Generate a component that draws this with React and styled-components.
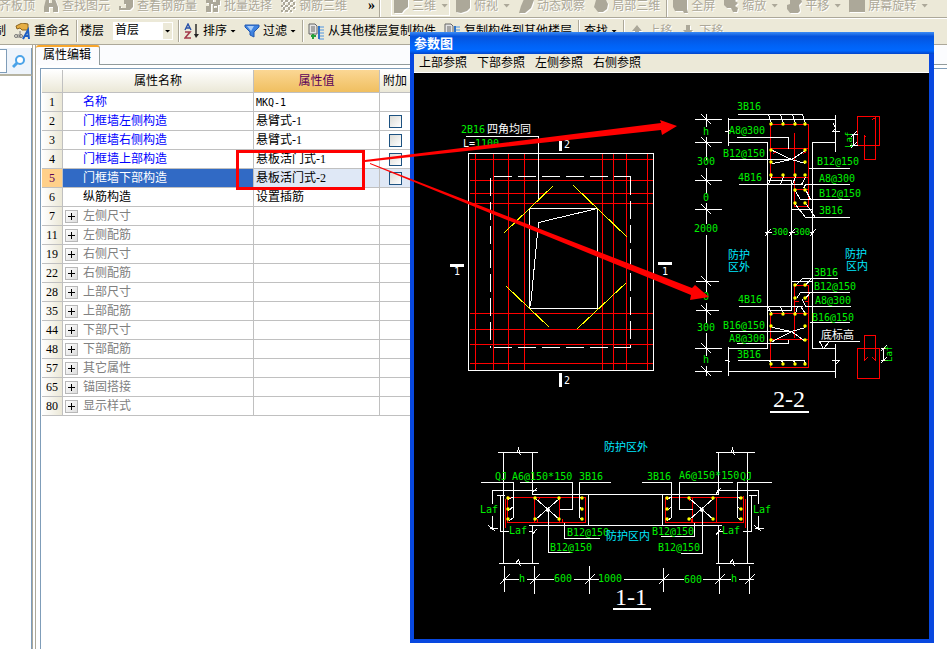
import { useState } from 'react'
import styled, { createGlobalStyle } from 'styled-components'

const GlobalStyle = createGlobalStyle`
  * {
    box-sizing: border-box;
  }

  body {
    margin: 0;
    background-color: #ffffff;
    font-family: "Liberation Serif", "Noto Sans CJK SC", sans-serif;
    font-size: 12px;
    line-height: 16px;
    color: #000000;
  }

  button, input, select {
    font: inherit;
    color: inherit;
  }
`;

// Styled components
const AppContainer = styled.div`
  position: relative;
  display: flex;
  flex-direction: column;
  min-height: 100vh;
  overflow: hidden;
`;

const ToolBar = styled.div`
  display: flex;
  align-items: center;
  height: ${props => props.$top ? '18px' : '27px'};
  padding-bottom: ${props => props.$top ? '6px' : '0'};
  background-color: #ece9d8;
  border-bottom: 1px solid #aca899;
  box-shadow: ${props => props.$top ? 'none' : 'inset 0 1px 0 #ffffff'};
  white-space: nowrap;
  overflow: hidden;
`;

const ToolButton = styled.button`
  display: flex;
  flex: none;
  align-items: center;
  gap: 3px;
  height: 20px;
  padding: 0 4px;
  border: none;
  background: none;
  color: #000000;
  cursor: pointer;

  &:disabled {
    color: #aca899;
    text-shadow: 1px 1px 0 #ffffff;
    cursor: default;
  }
`;

// First button of a bar that is scrolled partly out of view
const ClippedButton = styled(ToolButton)`
  margin-left: ${props => props.disabled ? '-5px' : '-10px'};
`;

const FramedButton = styled(ToolButton)`
  padding: 0 1px;
  margin: 0 1px 0 10px;
  border: 1px solid #ffffff;
`;

const Caret = styled.span`
  width: 6px;
  height: 3px;
  background-color: currentColor;
  clip-path: polygon(0 0, 100% 0, 50% 100%);

  ${ToolButton}:disabled & {
    width: 7px;
    height: 4px;
    margin-left: 2px;
  }
`;

const Separator = styled.span`
  flex: none;
  width: 2px;
  height: 22px;
  margin-left: 2px;
  background-color: #aca899;
  border-right: 1px solid #ffffff;
`;

const Overflow = styled.span`
  flex: none;
  width: 26px;
  padding-left: 17px;
  font-size: 14px;
  font-weight: 700;
  line-height: 10px;
`;

const FloorLabel = styled.label`
  display: flex;
  align-items: center;
  gap: 9px;
  padding: 0 3px 0 2px;
`;

const SelectBox = styled.span`
  display: flex;
  align-items: center;
  justify-content: flex-end;
  position: relative;
  width: 60px;
  height: 18px;
  padding-right: 1px;
  background-color: #ffffff;
`;

const FloorSelect = styled.select`
  position: absolute;
  inset: 0;
  width: 100%;
  padding: 0 0 3px 2px;
  border: none;
  background: transparent;
  appearance: none;
`;

const DropArrow = styled.span`
  display: flex;
  align-items: center;
  justify-content: center;
  width: 9px;
  height: 16px;
  background-color: #ece9d8;
`;

const Body = styled.div`
  display: flex;
  flex: 1;
`;

const SidePanel = styled.aside`
  display: flex;
  flex-direction: column;
  flex: none;
  width: 36px;
  padding-top: 3px;
  border-right: 4px double #aca899;
  background-color: #ffffff;
`;

const SearchRow = styled.div`
  display: flex;
  align-items: center;
  gap: 5px;
  height: 28px;
  border-right: 1px solid #7f9db9;
  border-bottom: 2px solid #b7b4a2;
  background-color: #eef4fb;
`;

const SearchInput = styled.input`
  width: 7px;
  height: 24px;
  padding: 0;
  border: 1px solid #7f9db9;
  border-left: none;
  background-color: #ffffff;
`;

const PlainButton = styled.button`
  display: flex;
  padding: 0;
  border: none;
  background: none;
`;

const SideList = styled.div`
  flex: 1;
  border-right: 1px solid #7f9db9;
`;

const Editor = styled.main`
  display: flex;
  flex: 1;
  flex-direction: column;
  min-width: 0;
`;

const TabStrip = styled.div`
  height: 20px;
  background-color: #fbfcfe;
  border-bottom: 1px solid #919b9c;
`;

const Tab = styled.button`
  height: 20px;
  padding: 0 8px 2px 7px;
  border: none;
  border-top: 2px solid #f8a72d;
  border-right: 1px solid #919b9c;
  border-radius: 3px 3px 0 0;
  background-color: #fcfcfe;
  line-height: 16px;
`;

const GridFrame = styled.div`
  flex: 1;
  margin: 3px 0 0 4px;
  padding: 1px;
  border-top: 1px solid #7f9db9;
  border-left: 1px solid #7f9db9;
`;

const Grid = styled.table`
  width: 369px;
  border-collapse: separate;
  border-spacing: 0;
  table-layout: fixed;
`;

const HeadCell = styled.th`
  width: ${props => props.$width};
  height: 23px;
  padding: 0;
  border-right: 1px solid #c0c0c0;
  border-bottom: 1px solid #c0c0c0;
  background: ${props => props.$active
    ? 'linear-gradient(#fbd794, #f0bf60)'
    : 'linear-gradient(#ffffff, #ebe8d7)'};
  color: ${props => props.$active ? '#5a005a' : '#000000'};
  font-weight: 400;
`;

const NumberCell = styled.th`
  height: 19px;
  padding: 0;
  border-right: 1px solid #c0c0c0;
  border-bottom: 1px solid #c0c0c0;
  background: ${props => props.$selected ? '#ffd08a' : 'linear-gradient(90deg, #ffffff, #ebe8d7)'};
  color: ${props => props.$selected ? '#5a005a' : '#000000'};
  font-weight: 400;
`;

const Cell = styled.td`
  height: 19px;
  padding: 0 2px;
  border-right: 1px solid #c0c0c0;
  border-bottom: 1px solid #c0c0c0;
  background-color: ${props => props.$fill || '#ffffff'};
  color: ${props => props.$color || '#000000'};
  line-height: 16px;
  white-space: nowrap;
`;

const NameLine = styled.div`
  display: flex;
  align-items: center;
  gap: 5px;
  padding-left: ${props => props.$indent ? '18px' : '0'};
`;

const ExpandButton = styled.button`
  display: flex;
  width: 13px;
  height: 13px;
  padding: 0;
  border: 1px solid #b8b8b8;
  background: linear-gradient(135deg, #ffffff, #dddddd);
`;

const Code = styled.span`
  font-family: "DejaVu Sans Mono", monospace;
  font-size: 10px;
`;

const CheckBox = styled.input`
  display: block;
  width: 13px;
  height: 13px;
  margin: 0 auto;
  appearance: none;
  border: 1px solid #1d5281;
  background: linear-gradient(135deg, #dcdcd7, #ffffff);

  &:checked {
    background: #21a121;
  }
`;

const Dialog = styled.section`
  position: absolute;
  top: 32px;
  left: 410px;
  display: flex;
  flex-direction: column;
  border: 4px solid #0848e0;
  border-top: none;
  border-right-width: 5px;
  background-color: #ece9d8;
`;

const TitleBar = styled.h1`
  height: 22px;
  margin: 0 -5px 0 -4px;
  padding: 4px 4px 0;
  background: linear-gradient(#3c8cf5, #0553dd 20%, #0062f5 60%, #0068ff 85%, #0444c8);
  color: #ffffff;
  font-size: 13px;
  font-weight: 700;
  line-height: 16px;
`;

const MenuBar = styled.nav`
  display: flex;
  gap: 10px;
  height: 19px;
  padding: 0 5px;
  border-bottom: 1px solid #ffffff;
`;

const MenuItem = styled.button`
  padding: 0;
  border: none;
  background: none;
  line-height: 16px;
`;

const Drawing = styled.svg`
  display: block;
  background-color: #000000;
`;

const Pen = styled.g`
  fill: none;
  stroke: ${props => props.$color};
  stroke-width: ${props => props.$width || 1};
  shape-rendering: crispEdges;
`;

const Label = styled.text`
  fill: ${props => props.$color || '#00f000'};
  font-family: ${props => props.$serif
    ? '"Liberation Serif", serif'
    : '"DejaVu Sans Mono", "Noto Sans CJK SC", monospace'};
  font-size: ${props => props.$size || 10}px;
`;

const Callout = styled.svg`
  position: absolute;
  top: 110px;
  left: 230px;
  pointer-events: none;
`;

// Toolbar glyphs, drawn on a 16px box
const glyphs = {
  find: 'M3 1h3v4h3V1h3l3 8v5h-5V9H6v5H1V9z',
  view: 'M6 1h9v8l-3 3H1V8h2v2h5V6H6z',
  batch: 'M1 1h7v3h3V2h4v5h-2v7H8V6H6v8H1V8h3V5H1zM9 8v2h3V8z',
  mesh: 'M1 2h14v2H1zM1 7h14v2H1zM1 12h11v2H1zM3 0h2v14H3zM8 0h2v14H8zM13 0h2v11h-2z',
  cube: 'M1 0h14v9l-4 3-2 3H1z',
  top: 'M1 2l4-2h10v10l-3 3-6 2-5-1z',
  orbit: 'M6 1l6-2 4 3-3 8-6 5H1l2-7z',
  local: 'M3 2l5-2 5 2 2 4-1 5-4 3H5L1 9z',
  screen: 'M1 0h14v11l1 4h-4l-1-2H3L1 9z',
  zoom: 'M1 0h14l-3 3 3 2-3 3 3 2-1 4h-4l-2-4H4L1 7z',
  pan: 'M1 7l3-1V2l5-2h6l1 4-3 3 1 6-2 2H4L1 11z',
  rotate: 'M0 0h16v14H0z',
  up: 'M8 2l5 6h-3v6H6V8H3z',
  down: 'M6 2h4v5h3l-5 6-5-6h3z',
};

function GrayIcon({ name }) {
  return (
    <svg width="16" height="16" viewBox="0 0 16 16" aria-hidden="true">
      <path d={glyphs[name]} fill="#ffffff" transform="translate(1 1)" fillRule="evenodd" />
      <path d={glyphs[name]} fill="#aca899" fillRule="evenodd" />
    </svg>
  );
}

function RenameIcon() {
  return (
    <svg width="17" height="17" viewBox="0 0 17 17" aria-hidden="true">
      <path d="M2 3l6-3 6 1v6H8L6 5 3 6z" fill="#e6ae43" stroke="#8a6420" />
      <circle cx="2" cy="13" r="1.5" fill="none" stroke="#777777" />
      <path d="M4 11v4M6 8v7" stroke="#777777" />
      <circle cx="7" cy="13" r="1.5" fill="none" stroke="#777777" />
      <path d="M9 16l5-9 1 9M11 13h4" fill="none" stroke="#1d5fc4" strokeWidth="2" />
    </svg>
  );
}

function SortIcon() {
  return (
    <svg width="16" height="16" viewBox="0 0 16 16" aria-hidden="true">
      <path d="M1 7l3-6 3 6M2 5h4" fill="none" stroke="#2a52a8" strokeWidth="1.4" />
      <path d="M1 9h5l-5 6h6" fill="none" stroke="#a33a4a" strokeWidth="1.6" />
      <path d="M12 1v11" stroke="#222222" strokeWidth="1.4" />
      <path d="M10 11h5l-3 4z" fill="#222222" />
    </svg>
  );
}

function FilterIcon() {
  return (
    <svg width="16" height="16" viewBox="0 0 16 16" aria-hidden="true">
      <path d="M1 2h14v2l-5 5v5l-4-2V9L1 4z" fill="#3f83e0" stroke="#2359b0" />
      <path d="M3 3h7L7 8z" fill="#a9cdf8" />
    </svg>
  );
}

function CopyIcon() {
  return (
    <svg width="17" height="17" viewBox="0 0 17 17" aria-hidden="true">
      <path d="M1 1h6l2 2v8H1z" fill="#e4e4e4" stroke="#666666" />
      <path d="M3 4h4M3 6h4M3 8h4" stroke="#666666" />
      <path d="M5 11v5M3 13h5" stroke="#23a03a" strokeWidth="2" />
      <path d="M11 4h5M11 7h5M11 10h5M11 13h5M11 16h5" stroke="#4f94e0" />
      <path d="M11 3v13" stroke="#2f74c8" strokeWidth="2" />
    </svg>
  );
}

function SearchIcon() {
  return (
    <svg width="15" height="15" viewBox="0 0 15 15" aria-hidden="true">
      <circle cx="8" cy="6" r="4" fill="#ffffff" stroke="#4ba3e8" strokeWidth="2" />
      <path d="M5 9l-4 4" stroke="#4ba3e8" strokeWidth="3" />
    </svg>
  );
}

const properties = [
  { id: 1, name: '名称', value: 'MKQ-1', code: true },
  { id: 2, name: '门框墙左侧构造', value: '悬臂式-1', extra: true },
  { id: 3, name: '门框墙右侧构造', value: '悬臂式-1', extra: true },
  { id: 4, name: '门框墙上部构造', value: '悬板活门式-1', extra: true },
  { id: 5, name: '门框墙下部构造', value: '悬板活门式-2', extra: true },
  { id: 6, name: '纵筋构造', value: '设置插筋', color: '#000000' },
  { id: 7, name: '左侧尺寸', group: true },
  { id: 11, name: '左侧配筋', group: true },
  { id: 19, name: '右侧尺寸', group: true },
  { id: 22, name: '右侧配筋', group: true },
  { id: 28, name: '上部尺寸', group: true },
  { id: 35, name: '上部配筋', group: true },
  { id: 44, name: '下部尺寸', group: true },
  { id: 48, name: '下部配筋', group: true },
  { id: 57, name: '其它属性', group: true },
  { id: 65, name: '锚固搭接', group: true },
  { id: 80, name: '显示样式', group: true },
];

function nameColor(row, selected) {
  if (selected) return '#ffffff';
  if (row.group) return '#808080';
  return row.color || '#0000ff';
}

function PropertyGrid() {
  const [selectedId, setSelectedId] = useState(5);

  return (
    <Grid>
      <thead>
        <tr>
          <HeadCell $width="21px" aria-label="序号" />
          <HeadCell $width="191px">属性名称</HeadCell>
          <HeadCell $width="126px" $active>属性值</HeadCell>
          <HeadCell $width="31px">附加</HeadCell>
        </tr>
      </thead>
      <tbody>
        {properties.map(row => {
          const selected = row.id === selectedId;
          return (
            <tr key={row.id} onClick={() => setSelectedId(row.id)}>
              <NumberCell scope="row" $selected={selected}>{row.id}</NumberCell>
              <Cell $fill={selected ? '#316ac5' : null} $color={nameColor(row, selected)}>
                <NameLine $indent={!row.group}>
                  {row.group && (
                    <ExpandButton aria-label={'展开' + row.name}>
                      <svg width="11" height="11" viewBox="0 0 11 11" aria-hidden="true">
                        <path d="M2 5h7v1H2zM5 2h1v7H5z" fill="#000000" />
                      </svg>
                    </ExpandButton>
                  )}
                  {row.name}
                </NameLine>
              </Cell>
              <Cell $fill={selected ? '#dfe8f6' : null}>
                {row.code ? <Code>{row.value}</Code> : row.value}
              </Cell>
              <Cell $fill={selected ? '#dfe8f6' : null}>
                {row.extra && <CheckBox type="checkbox" aria-label={'附加' + row.name} />}
              </Cell>
            </tr>
          );
        })}
      </tbody>
    </Grid>
  );
}

// Line work, grouped by pen colour
const whiteLines = [
  // elevation
  'M468 153H653V370H468Z',
  'M529 208H597V308H529Z',
  'M597 208L538 222L530 306',
  'M465 136H538V199',
  // section 2-2, level dimensions
  'M706 113V126M706 136V159M706 167V193M706 202V223M706 234V291M706 302V322M706 332V355M706 365V375',
  'M694 119H721M694 142H721M694 180H721M694 209H721M695 281H718M695 310H718M694 348H721M694 371H721',
  'M701 114L711 124M701 137L711 147M701 175L711 185M701 204L711 214M701 276L711 286M701 305L711 315M701 343L711 353M701 366L711 376',
  // section 2-2, concrete outline
  'M728 119H835M728 117V145M835 114V151M728 142H767V348H728M835 142H812V348H835',
  'M724 131H727L730 129M833 123L835 128L832 131H839M767 180H791M791 180V310M791 209H812M791 281H812M767 310H791',
  'M728 346V375M728 371H835M835 343V377M724 360H727L730 362M831 360H839L835 364',
  // section 2-2, leaders
  'M737 114H802M768 114L771 123M780 114L783 123M792 114L795 123M802 114L805 123',
  'M736 137H788V148M729 159H791M772 150L791 159L805 163M805 150L791 159L772 163',
  'M738 184H802M768 184L771 176M780 184L783 176M792 184L795 176M801 184L805 177',
  'M808 168H849M849 184H805L803 188M849 199H800L795 191M810 199L806 191M849 217H805L795 204M815 217L806 204',
  'M764 232H771M788 232H794M809 232H813M764 236L770 229M788 236L794 229M809 236L815 229',
  'M837 278H802L795 285M810 279L805 285M849 292H800L796 298M810 292L805 298M850 306H805L802 299',
  'M738 306H802M768 306L771 313M780 306L783 313M797 306L795 313M800 306L805 313',
  'M729 331H791M772 327L791 331L805 341M805 327L791 331L772 341M736 343H788V339',
  'M737 360H804M769 360L771 364M781 360L783 364M793 360L795 364M804 360L805 364M809 322H849',
  'M818 341H859M819 341L823 348L829 341',
  'M853 134V145M849 134H857M849 145H857M850 137L856 131M850 148L856 142',
  'M883 348V360M880 348H887M880 360H887M880 351L886 345M880 363L886 357',
  // section 1-1, walls and slab
  'M497 452H537M503 452V563M532 452V494H718V452M498 563H538M532 563V525M528 525H721M715 452H754M747 452V563M715 563H753M718 563V525',
  'M515 452H517L518 448L520 455M729 452H731L732 448L734 455M515 563L518 559L520 566M729 563L732 559L734 566',
  'M588 494V525M662 494V525',
  // section 1-1, leaders
  'M480 482H513V517L509 520M513 496L508 499M513 506L508 510M519 482H572V509H559M610 482H579V517L582 520M579 496L582 499M579 506L582 510',
  'M535 498L559 519M559 498L535 519M548 510V552H571M564 522V538H599',
  'M641 482H671V517L667 520M671 496L667 499M671 506L667 510M732 482H679V509H692M771 482H737V517L741 520M737 496L741 499M737 506L741 510',
  'M689 498L713 519M713 498L689 519M702 510V553H680M694 522V536H660',
  'M536 490H492V503M492 515V528M489 528H497M531 493L536 488M500 495V531H508M496 495H504M528 531H532M531 535L536 529M488 525L495 531',
  'M716 490H758V503M758 515V528M754 528H763M715 494L720 488M751 495V531H742M748 495H756M717 531H722M715 535L720 529M754 525L761 531',
  // section 1-1, width dimensions
  'M502 579H518M526 579H553M573 579H598M623 579H683M702 579H730M738 579H753',
  'M504 565V591M534 565V593M589 565V593M663 567V591M719 565V593M749 565V593',
  'M499 584L509 574M529 584L539 574M584 584L594 574M658 584L668 574M714 584L724 574M744 584L754 574',
];

const redLines = [
  'M475 153V370M493 153V370M508 153V370M524 153V370M602 153V370M613 153V370M626 153V370M647 153V370',
  'M469 159H653M469 180H653M469 193H653M469 203H653M469 313H653M469 329H653M469 344H653M469 363H653',
  'M770 124H808V177H770ZM770 148H808M794 132V206H808V177M794 189H808M773 153L776 151M803 153L806 151',
  'M770 313H808V367H770ZM770 339H808M794 337V285H808V313M794 301H798M804 301H808',
  'M857 116H879V145H857ZM875 116V159H864V135L866 137M875 117L872 119',
  'M857 348H879V378H857ZM864 360V335H875V360M864 360L867 357M875 360L872 357',
  'M507 497H585V522H507ZM505 498V527M507 495V498M534 497V522M559 497V522M536 501L539 498M562 522V518M537 518V522',
  'M665 497H743V522H665ZM745 498V527M743 495V498M692 497V522M716 497V522M690 501L688 498M691 518V522',
];

const yellowLines = [
  'M553 185L504 232M573 185L627 237M506 286L549 327M626 282L577 328',
];

const rebarDots = [
  ...[771, 783, 795, 805].flatMap(x => [[x, 124], [x, 175], [x, 314], [x, 364]]),
  ...[771, 805].flatMap(x => [[x, 150], [x, 162], [x, 326], [x, 340]]),
  ...[795, 805].flatMap(x => [[x, 190], [x, 203], [x, 285], [x, 298]]),
  ...[508, 582, 667, 741].flatMap(x => [[x, 498], [x, 509], [x, 519]]),
  ...[535, 559, 689, 713].flatMap(x => [[x, 498], [x, 519]]),
];

const rebarLabels = [
  [461, 133, '2B16'], [475, 147, '1100'],
  [737, 110, '3B16'], [729, 134, 'A8@300'], [723, 157, 'B12@150'], [738, 181, '4B16'],
  [817, 165, 'B12@150'], [819, 182, 'A8@300'], [819, 197, 'B12@150'], [819, 214, '3B16'],
  [703, 135, 'h'], [697, 165, '300'], [703, 201, '0'], [694, 232, '2000'],
  [703, 300, '0'], [697, 331, '300'], [703, 363, 'h'],
  [814, 276, '3B16'], [814, 290, 'B12@150'], [815, 304, 'A8@300'], [812, 321, 'B16@150'],
  [738, 303, '4B16'], [723, 329, 'B16@150'], [729, 342, 'A8@300'], [737, 358, '3B16'],
  [495, 480, 'QJ'], [512, 480, 'A6@150*150'], [579, 480, '3B16'],
  [647, 480, '3B16'], [679, 479, 'A6@150*150'], [740, 480, 'QJ'],
  [480, 513, 'Laf'], [509, 534, 'Laf'], [722, 534, 'Laf'], [753, 513, 'Laf'],
  [567, 536, 'B12@150'], [550, 551, 'B12@150'], [652, 535, 'B12@150'], [658, 551, 'B12@150'],
  [519, 582, 'h'], [554, 582, '600'], [598, 582, '1000'], [684, 583, '600'], [731, 582, 'h'],
];

const zoneLabels = [
  [728, 259, '防护'], [728, 271, '区外'], [845, 258, '防护'], [846, 270, '区内'],
  [604, 451, '防护区外'], [606, 540, '防护区内'],
];

function SectionDrawing() {
  return (
    <Drawing width="515" height="566" viewBox="414 73 515 566" role="img" aria-label="门框墙参数图">
      <g transform="translate(0.5 0.5)">
        <Pen $color="#ff0000">
          {redLines.map(d => <path key={d} d={d} />)}
        </Pen>
        <Pen $color="#ffffff">
          {whiteLines.map(d => <path key={d} d={d} />)}
          <path d="M493 176H630M493 347H630" strokeDasharray="18 6" />
          <path d="M490 177V347M630 176V347" strokeDasharray="18 6" />
        </Pen>
        <Pen $color="#ffff00">
          {yellowLines.map(d => <path key={d} d={d} />)}
        </Pen>
      </g>
      {rebarDots.map(([x, y]) => (
        <circle key={x + '-' + y} cx={x} cy={y} r="1.7" fill="#ffff00" />
      ))}
      <Pen $color="#ffffff" $width={3}>
        <path d="M560.5 141V151M560.5 373V387M450 265.5H464M658 263.5H672" />
      </Pen>
      <Pen $color="#ffffff" $width={2}>
        <path d="M770 412H809M613 609H651" />
      </Pen>
      <circle cx="548" cy="510" r="2" fill="#ffffff" />
      <circle cx="702" cy="510" r="2" fill="#ffffff" />
      {rebarLabels.map(([x, y, text]) => (
        <Label key={x + '-' + y} x={x} y={y}>{text}</Label>
      ))}
      <Label x="772" y="235" $size={9}>300</Label>
      <Label x="794" y="235" $size={9}>300</Label>
      <Label transform="translate(852 148) rotate(-90)" $size={9}>Laf</Label>
      <Label transform="translate(892 362) rotate(-90)" $size={9}>Laf</Label>
      {zoneLabels.map(([x, y, text]) => (
        <Label key={x + '-' + y} x={x} y={y} $color="#00e8ff" $size={11}>{text}</Label>
      ))}
      <Label x="487" y="133" $color="#ffffff" $size={11}>四角均同</Label>
      <Label x="463" y="147" $color="#ffffff">L=</Label>
      <Label x="821" y="339" $color="#ffffff" $size={11}>底标高</Label>
      <Label x="564" y="148" $color="#ffffff">2</Label>
      <Label x="564" y="384" $color="#ffffff">2</Label>
      <Label x="454" y="275" $color="#ffffff">1</Label>
      <Label x="662" y="275" $color="#ffffff">1</Label>
      <Label x="773" y="407" $color="#ffffff" $size={24} $serif>2-2</Label>
      <Label x="615" y="605" $color="#ffffff" $size={24} $serif>1-1</Label>
    </Drawing>
  );
}

function App() {
  const [floor, setFloor] = useState('首层');

  return (
    <AppContainer>
      <GlobalStyle />
      <ToolBar $top>
        <ClippedButton disabled>齐板顶</ClippedButton>
        <ToolButton disabled><GrayIcon name="find" />查找图元</ToolButton>
        <ToolButton disabled><GrayIcon name="view" />查看钢筋量</ToolButton>
        <ToolButton disabled><GrayIcon name="batch" />批量选择</ToolButton>
        <ToolButton disabled><GrayIcon name="mesh" />钢筋三维</ToolButton>
        <Overflow>»</Overflow>
        <Separator />
        <FramedButton disabled><GrayIcon name="cube" />三维<Caret /></FramedButton>
        <ToolButton disabled><GrayIcon name="top" />俯视<Caret /></ToolButton>
        <ToolButton disabled><GrayIcon name="orbit" />动态观察</ToolButton>
        <ToolButton disabled><GrayIcon name="local" />局部三维</ToolButton>
        <Separator />
        <ToolButton disabled><GrayIcon name="screen" />全屏</ToolButton>
        <ToolButton disabled><GrayIcon name="zoom" />缩放<Caret /></ToolButton>
        <ToolButton disabled><GrayIcon name="pan" />平移<Caret /></ToolButton>
        <ToolButton disabled><GrayIcon name="rotate" />屏幕旋转<Caret /></ToolButton>
      </ToolBar>
      <ToolBar>
        <ClippedButton>制</ClippedButton>
        <ToolButton><RenameIcon />重命名</ToolButton>
        <Separator />
        <FloorLabel>
          楼层
          <SelectBox>
            <DropArrow><Caret /></DropArrow>
            <FloorSelect value={floor} onChange={(e) => setFloor(e.target.value)}>
              <option value="首层">首层</option>
              <option value="第2层">第2层</option>
            </FloorSelect>
          </SelectBox>
        </FloorLabel>
        <Separator />
        <ToolButton><SortIcon />排序<Caret /></ToolButton>
        <ToolButton><FilterIcon />过滤<Caret /></ToolButton>
        <Separator />
        <ToolButton><CopyIcon />从其他楼层复制构件</ToolButton>
        <ToolButton><CopyIcon />复制构件到其他楼层</ToolButton>
        <Separator />
        <ToolButton>查找<Caret /></ToolButton>
        <Separator />
        <ToolButton disabled><GrayIcon name="up" />上移</ToolButton>
        <ToolButton disabled><GrayIcon name="down" />下移</ToolButton>
      </ToolBar>
      <Body>
        <SidePanel>
          <SearchRow>
            <SearchInput type="text" aria-label="搜索构件" />
            <PlainButton aria-label="搜索"><SearchIcon /></PlainButton>
          </SearchRow>
          <SideList />
        </SidePanel>
        <Editor>
          <TabStrip>
            <Tab>属性编辑</Tab>
          </TabStrip>
          <GridFrame>
            <PropertyGrid />
          </GridFrame>
        </Editor>
      </Body>
      <Dialog role="dialog" aria-label="参数图">
        <TitleBar>参数图</TitleBar>
        <MenuBar>
          <MenuItem>上部参照</MenuItem>
          <MenuItem>下部参照</MenuItem>
          <MenuItem>左侧参照</MenuItem>
          <MenuItem>右侧参照</MenuItem>
        </MenuBar>
        <SectionDrawing />
      </Dialog>
      <Callout width="490" height="200" viewBox="230 110 490 200" aria-hidden="true">
        <rect x="237.5" y="151.5" width="126" height="37" fill="none" stroke="#ff0000" strokeWidth="3" />
        <path d="M365 160L661 123L660 120L677 126L662 135L661 130L365 162Z" fill="#ff0000" />
        <path d="M370 163L692 288L695 285L709 297L690 300L691 295L370 164Z" fill="#ff0000" />
      </Callout>
    </AppContainer>
  );
}

export default App
